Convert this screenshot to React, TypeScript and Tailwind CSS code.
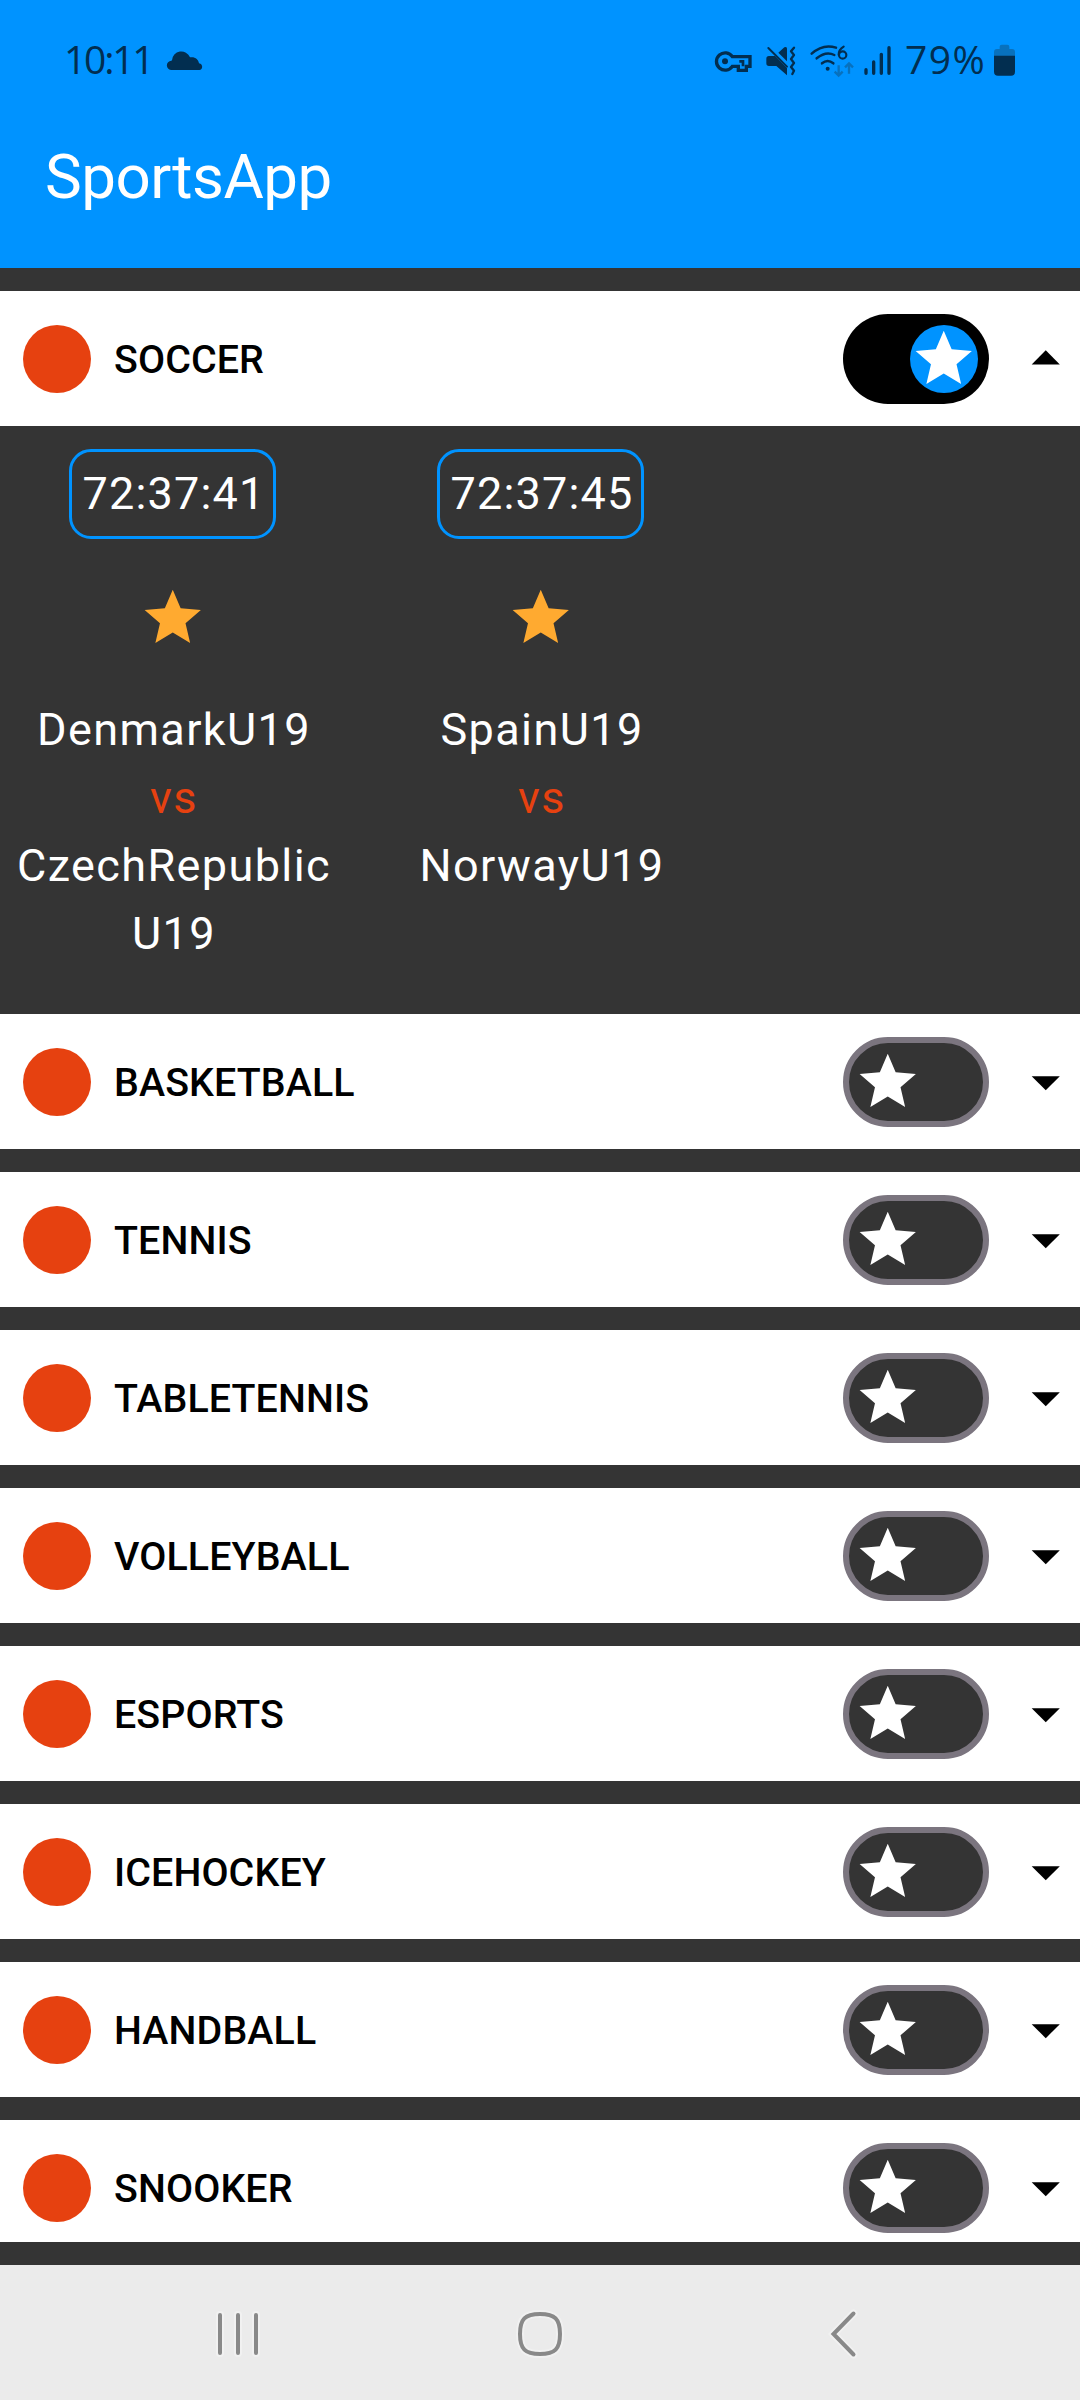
type Match = { time: string; home: string; away: string[] };

const matches: Match[] = [
  { time: "72:37:41", home: "DenmarkU19", away: ["CzechRepublic", "U19"] },
  { time: "72:37:45", home: "SpainU19", away: ["NorwayU19"] },
];

const collapsedSports = [
  "BASKETBALL",
  "TENNIS",
  "TABLETENNIS",
  "VOLLEYBALL",
  "ESPORTS",
  "ICEHOCKEY",
  "HANDBALL",
  "SNOOKER",
];

function Star({ className }: { className: string }) {
  return (
    <svg viewBox="0 0 24 24" className={`size-[67.5px] shrink-0 fill-current ${className}`}>
      <path d="M12 17.27L18.18 21l-1.64-7.03L22 9.24l-7.19-.61L12 2 9.19 8.63 2 9.24l5.46 4.73L5.82 21z" />
    </svg>
  );
}

function Toggle({ on }: { on: boolean }) {
  return on ? (
    <div className="flex h-[90px] w-[146px] items-center justify-end rounded-full bg-black pr-[11.5px]">
      <div className="mt-px size-[67.5px] rounded-full bg-[#0093ff]">
        <Star className="text-white" />
      </div>
    </div>
  ) : (
    <div className="flex h-[90px] w-[146px] items-center rounded-full border-[6px] border-[#7b757f] bg-[#343434] pl-[5px]">
      <Star className="mt-px text-white" />
    </div>
  );
}

function SportRow({ name, open = false }: { name: string; open?: boolean }) {
  return (
    <div className="flex h-[135px] shrink-0 items-center bg-white">
      <div className="ml-[23px] size-[68px] rounded-full bg-[#e64110]" />
      <div className="ml-[23px] flex-1 pt-[2px] text-[39.375px] leading-[56px] font-medium tracking-[0.1px] text-black">
        {name}
      </div>
      <Toggle on={open} />
      <svg viewBox="0 0 24 24" className="mr-[0.5px] ml-[23px] size-[67.5px] fill-black">
        <path d={open ? "M7 14l5-5 5 5z" : "M7 10l5 5 5-5z"} />
      </svg>
    </div>
  );
}

function MatchCard({ match }: { match: Match }) {
  return (
    <div className="flex flex-col items-center text-[45px] leading-[68px] tracking-[1.4px] text-white">
      <div className="flex h-[90px] w-[207px] items-center justify-center rounded-[22px] border-[3px] border-[#0093ff] pl-[3px] tracking-[1.2px]">
        {match.time}
      </div>
      <Star className="mt-[45px] mb-[44px] text-[#ffaa30]" />
      <div className="pl-[3px]">{match.home}</div>
      <div className="pl-[3px] text-[#e64110]">vs</div>
      {match.away.map((line) => (
        <div key={line} className="pl-[3px]">
          {line}
        </div>
      ))}
    </div>
  );
}

function StatusBar() {
  return (
    <div className="flex h-[120px] items-center text-[#022e50]">
      <div className="ml-[64px] w-[100px] pb-[2px] font-['Open_Sans'] text-[39px] leading-[40px] tracking-[-2.2px]">
        10:11
      </div>
      <svg viewBox="492 60 120 120" className="size-[40px] fill-current">
        <path d="M515 150a14 14 0 0 1-1-28l2-1a28 28 0 0 1 54-9c14-3 26 6 27 18 13 2 12 20 1 20z" />
      </svg>
      <svg viewBox="39 60 120 120" className="ml-[509px] h-[40px] w-[40px] fill-none stroke-current" strokeWidth="10">
        <path d="M97 110a26 26 0 1 0 0 29h18v12h24v-12h11v-29z" />
        <circle cx="75" cy="124" r="9" className="fill-current stroke-none" />
        <path d="M118 124h11v15" strokeWidth="8" />
      </svg>
      <svg viewBox="189 60 105 120" className="ml-[10px] h-[40px] w-[35px]">
        <path className="fill-current" d="M207 108h18l36 36v22l-32-28h-22a8 8 0 0 1-8-8v-14a8 8 0 0 1 8-8zM235 98l18-16q8-4 8 4v38z" />
        <path className="fill-none stroke-current" strokeWidth="6" strokeLinecap="round" d="M205 84l56 56" />
        <path className="fill-none stroke-current" strokeWidth="7" strokeLinecap="round" strokeLinejoin="round" d="M282 83l-9 11 9 11-9 12 9 12-9 12 9 11-5 10" />
      </svg>
      <svg viewBox="324 60 150 120" className="ml-[10px] h-[40px] w-[50px]">
        <g className="fill-none stroke-current" strokeWidth="7.5" strokeLinecap="round">
          <path d="M335 101q34-31 73-18" />
          <path d="M350 115q28-23 53-10" />
          <path d="M366 130q17-14 34 0" />
          <path d="M431 80q-15 9-15 24" strokeWidth="6.5" />
          <circle cx="428" cy="105" r="11" strokeWidth="6.5" />
        </g>
        <circle cx="383" cy="146" r="6" className="fill-current" />
        <g className="fill-none stroke-[#0871bd]" strokeWidth="7">
          <path d="M416 136v31M404 155l12 12 12-12M447 161v-31M435 142l12-12 12 12" />
        </g>
      </svg>
      <svg viewBox="486 60 90 120" className="ml-[4px] h-[40px] w-[30px] fill-none stroke-current" strokeWidth="10" strokeLinecap="round">
        <path d="M498 149v11M521 126v34M544 103v57M567 83v77" />
      </svg>
      <div className="ml-[13px] w-[87px] pb-[2px] font-['Open_Sans'] text-[39px] leading-[40px] tracking-[1.5px]">79%</div>
      <svg viewBox="876 60 75 120" className="h-[40px] w-[25px]">
        <path className="fill-[#0871bd]" d="M882 108V96q0-9 9-9h8v-7q0-6 6-6h17q6 0 6 6v7h8q9 0 9 9v12z" />
        <path className="fill-current" d="M882 107h63v48q0 12-12 12h-39q-12 0-12-12z" />
      </svg>
    </div>
  );
}

function NavBar() {
  return (
    <div className="flex h-[135px] shrink-0 items-center bg-[#ebebeb] pt-[2px] pl-[208px]">
      <svg viewBox="0 0 60 60" className="size-[60px] fill-none" strokeLinecap="round">
        <path d="M12 11v38M30 11v38M48 11v38" stroke="#f1f1f1" strokeWidth="8" />
        <path d="M12 11v38M30 11v38M48 11v38" stroke="#898989" strokeWidth="4" />
      </svg>
      <svg viewBox="0 0 60 60" className="ml-[242px] size-[60px] fill-none">
        <path d="M30 10C45 10 50 15 50 30S45 50 30 50 10 45 10 30 15 10 30 10z" stroke="#f1f1f1" strokeWidth="8" />
        <path d="M30 10C45 10 50 15 50 30S45 50 30 50 10 45 10 30 15 10 30 10z" stroke="#898989" strokeWidth="4" />
      </svg>
      <svg viewBox="0 0 60 60" className="ml-[242px] size-[60px] fill-none" strokeLinecap="round">
        <path d="M41.5 9.5L21.5 30l20 20.5" stroke="#f1f1f1" strokeWidth="8" />
        <path d="M41.5 9.5L21.5 30l20 20.5" stroke="#898989" strokeWidth="4" />
      </svg>
    </div>
  );
}

export default function App() {
  return (
    <div className="flex h-[2400px] w-[1080px] flex-col overflow-hidden bg-[#343434] font-['Roboto',sans-serif]">
      <header className="h-[268px] shrink-0 bg-[#0093ff]">
        <StatusBar />
        <h1 className="ml-[45px] pt-[18px] text-[61.875px] leading-[79px] tracking-[-0.5px] text-white">SportsApp</h1>
      </header>
      <main className="mt-[23px] mb-[23px] flex min-h-0 flex-1 flex-col gap-[23px] overflow-hidden">
        <section className="shrink-0">
          <SportRow name="SOCCER" open />
          <div className="grid h-[565px] grid-cols-[345px_345px_345px] gap-[23px] pt-[23px]">
            {matches.map((match) => (
              <MatchCard key={match.time} match={match} />
            ))}
          </div>
        </section>
        {collapsedSports.map((name) => (
          <SportRow key={name} name={name} />
        ))}
      </main>
      <NavBar />
    </div>
  );
}
